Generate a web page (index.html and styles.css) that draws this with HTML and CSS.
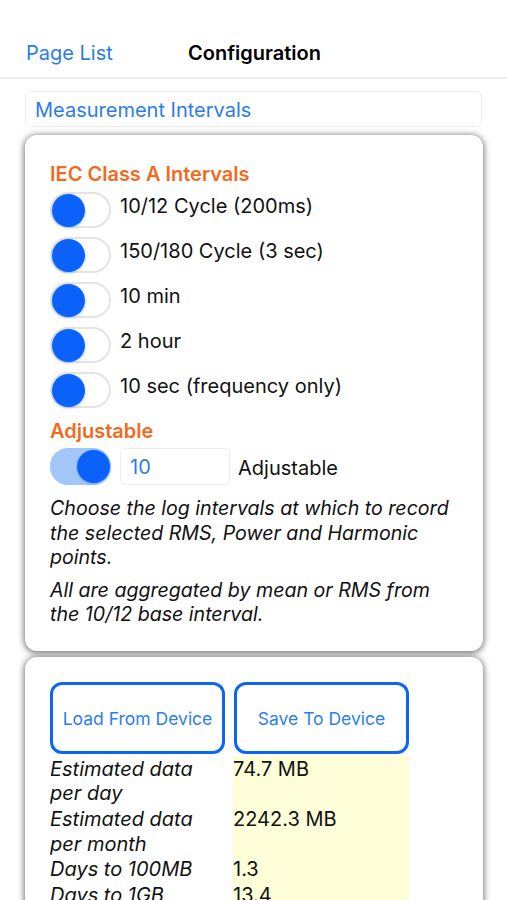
FILE: index.html
```html
<!DOCTYPE html>
<html>
<head>
<meta charset="utf-8">
<link rel="stylesheet" href="styles.css">
</head>
<body>
<div class="nav">
  <span class="back">Page List</span>
  <span class="title">Configuration</span>
</div>
<div class="section-head">Measurement Intervals</div>
<div class="card card-1">
  <div class="heading">IEC Class A Intervals</div>
  <div class="row"><span class="switch"><span class="knob"></span></span><span class="label">10/12 Cycle (200ms)</span></div>
  <div class="row"><span class="switch"><span class="knob"></span></span><span class="label">150/180 Cycle (3 sec)</span></div>
  <div class="row"><span class="switch"><span class="knob"></span></span><span class="label">10 min</span></div>
  <div class="row"><span class="switch"><span class="knob"></span></span><span class="label">2 hour</span></div>
  <div class="row"><span class="switch"><span class="knob"></span></span><span class="label">10 sec (frequency only)</span></div>
  <div class="heading heading-2">Adjustable</div>
  <div class="adj-row">
    <span class="switch on"><span class="knob"></span></span>
    <span class="input">10</span>
    <span class="adj-label">Adjustable</span>
  </div>
  <p class="note">Choose the log intervals at which to record the selected RMS, Power and Harmonic points.</p>
  <p class="note">All are aggregated by mean or RMS from the 10/12 base interval.</p>
</div>
<div class="card card-2">
  <div class="buttons">
    <span class="btn">Load From Device</span>
    <span class="btn">Save To Device</span>
  </div>
  <div class="table">
    <div class="k">Estimated data per day</div><div class="v">74.7 MB</div>
    <div class="k">Estimated data per month</div><div class="v">2242.3 MB</div>
    <div class="k">Days to 100MB</div><div class="v">1.3</div>
    <div class="k">Days to 1GB</div><div class="v">13.4</div>
  </div>
</div>
</body>
</html>
```
FILE: styles.css
```css
html, body {
  margin: 0;
  padding: 0;
  background: #fff;
  font-family: Inter, "Noto Sans", sans-serif;
  color: #111;
  font-size: 20px;
  overflow: hidden;
}
.nav {
  height: 79px;
  box-sizing: border-box;
  padding-top: 40px;
  display: flex;
  border-bottom: 2px solid #efefef;
  line-height: 26px;
}
.back {
  margin-left: 26px;
  width: 162px;
  color: #2b7de9;
}
.title {
  font-weight: 600;
  color: #000;
}
.section-head {
  margin: 12px 25px 0 25px;
  height: 36px;
  box-sizing: border-box;
  border: 1px solid #ececec;
  border-radius: 6px;
  padding: 2px 0 0 9px;
  line-height: 32px;
  color: #2b7de9;
}
.card {
  margin: 8px 24px 0 25px;
  border-radius: 12px;
  background: #fff;
  box-shadow: 0 1px 6px 1px rgba(0,0,0,0.55);
  box-sizing: border-box;
}
.card-1 {
  padding: 27px 24px 24px 25px;
}
.heading {
  color: #f26b1d;
  font-weight: 600;
  line-height: 24px;
  margin-bottom: 6px;
}
.heading-2 {
  margin-top: 2px;
  margin-bottom: 5px;
}
.row {
  display: flex;
  align-items: flex-start;
  height: 45px;
}
.switch {
  position: relative;
  width: 61px;
  height: 36px;
  box-sizing: border-box;
  border: 2px solid #e4e4e4;
  border-radius: 18px;
  flex: none;
  background: #fff;
}
.knob {
  position: absolute;
  left: 0;
  top: 0;
  width: 33px;
  height: 33px;
  margin: -0.5px 0 0 0;
  border-radius: 50%;
  background: #0a62fb;
  box-shadow: 0 1px 3px rgba(10,98,251,0.35);
}
.switch.on {
  background: #a3c6f9;
  border-color: #a3c6f9;
  height: 37px;
}
.switch.on .knob {
  left: auto;
  right: -1px;
  top: 0;
}
.label {
  margin-left: 9px;
  line-height: 24px;
  margin-top: 2px;
}
.adj-row {
  display: flex;
  align-items: center;
  height: 37px;
}
.input {
  margin-left: 9px;
  width: 110px;
  height: 37px;
  box-sizing: border-box;
  border: 1px solid #ececec;
  border-radius: 5px;
  padding: 1px 0 0 9px;
  line-height: 34px;
  color: #2b7de9;
}
.adj-label {
  margin-left: 8px;
  padding-top: 2px;
}
.note {
  margin: 11px 0 0 0;
  font-style: italic;
  font-size: 19.6px;
  line-height: 24.5px;
}
.note + .note {
  margin-top: 8px;
}
.card-2 {
  margin-top: 6px;
  padding: 25px 24px 30px 25px;
  height: 300px;
}
.buttons {
  display: flex;
  gap: 9px;
}
.btn {
  width: 175px;
  height: 72px;
  box-sizing: border-box;
  border: 3px solid #0b66f2;
  border-radius: 12px;
  display: flex;
  align-items: center;
  justify-content: center;
  color: #2b80ef;
  font-size: 17.5px;
  padding-top: 1px;
}
.table {
  margin-top: 2px;
  display: grid;
  grid-template-columns: 183px 176px;
  line-height: 24.7px;
}
.k {
  font-style: italic;
  padding-right: 12px;
  padding-top: 1px;
}
.v {
  background: #fefed9;
  padding-top: 1px;
}
```
